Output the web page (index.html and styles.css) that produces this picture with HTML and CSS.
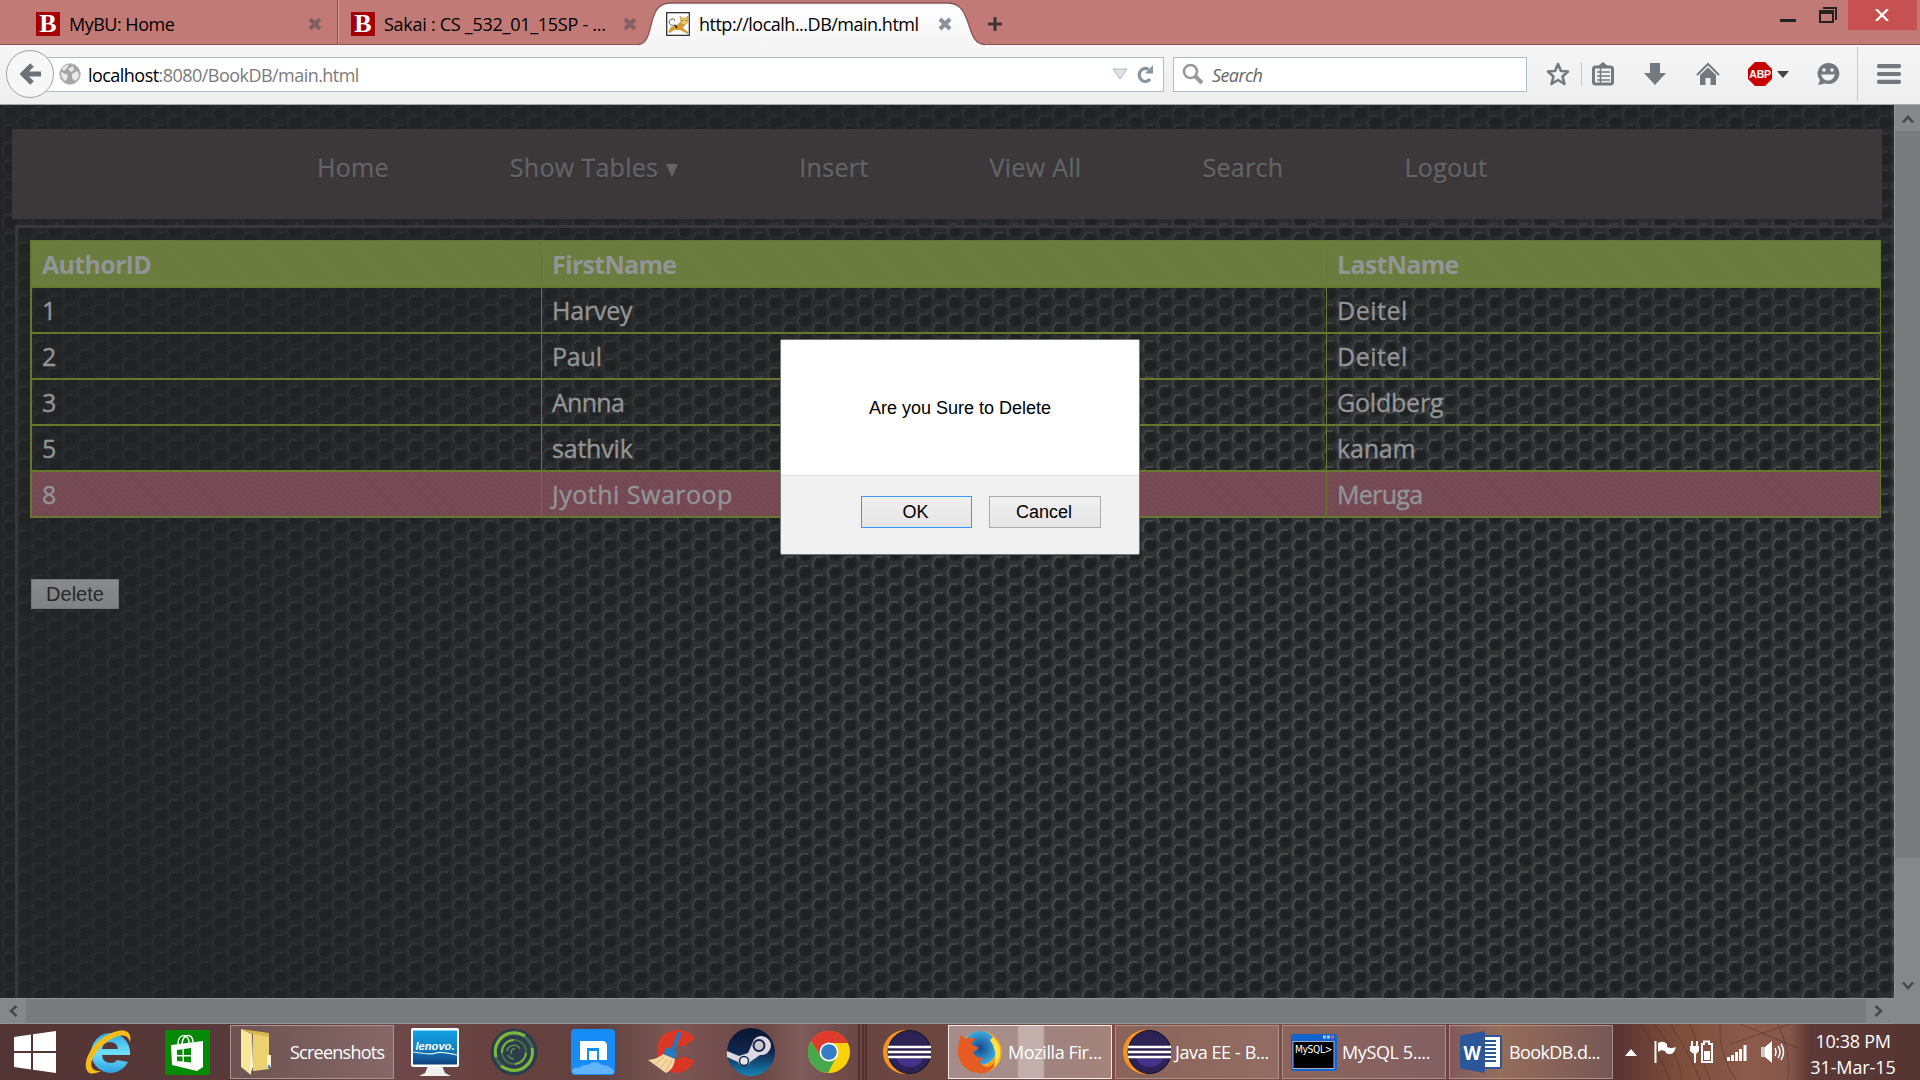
FILE: index.html
```
<!DOCTYPE html>
<html lang="en">
<head>
<meta charset="utf-8">
<title>BookDB</title>
<link rel="stylesheet" href="styles.css">
</head>
<body>
<header class="tabstrip">
  <div class="tab tab-first">
    <span class="bu">B</span><span class="tab-title t1">MyBU: Home</span>
    <svg class="x" viewBox="0 0 14 14"><path d="M2 2L12 12M12 2L2 12"/></svg>
  </div>
  <div class="tab tab-second">
    <span class="bu">B</span><span class="tab-title t2">Sakai : CS _532_01_15SP - ...</span>
    <svg class="x" viewBox="0 0 14 14"><path d="M2 2L12 12M12 2L2 12"/></svg>
  </div>
  <div class="tab tab-active">
    <svg class="tab-shape" viewBox="0 0 348 46"><defs><linearGradient id="tg" x2="0" y2="1"><stop offset="0" stop-color="#fff"/><stop offset="1" stop-color="#f5f5f5"/></linearGradient></defs><path d="M0 46V44.500C18 44 7 3 32 3H310C336 3 326 44.500 347 44.500V46Z" fill="url(#tg)"/><path d="M0 44.500C18 44 7 3 32 3H310C336 3 326 44.500 347 44.500" fill="none" stroke="#875459" stroke-width="1.300"/></svg>
    <svg class="tomcat" viewBox="0 0 24 24"><rect x=".7" y=".7" width="22.600" height="22.600" fill="#fff" stroke="#222" stroke-width="1.200"/><path d="M2 20L5 15 11 13 14 10 19 13 17 16 22 20 22 22 14 18 8 18 4 21Z" fill="#d89b32"/><path d="M14 4L16 6 20 6 22 4 22 10 19 13 15 12Z" fill="#ecc95a" stroke="#a98a3a" stroke-width=".6"/><path d="M9 13C3 15 1 8 6 7C9 6 9 9 8 9" fill="none" stroke="#555" stroke-width="1"/><path d="M9 13l2 3" stroke="#222" stroke-width="1.500"/><path d="M16 8.500h1M19.500 8.500h1" stroke="#333" stroke-width="1"/></svg>
    <span class="tab-title t3">http://localh...DB/main.html</span>
    <svg class="x x-active" viewBox="0 0 14 14"><path d="M2 2L12 12M12 2L2 12"/></svg>
  </div>
  <svg class="newtab" viewBox="0 0 16 16"><path d="M8 1V15M1 8H15" stroke="#3c3436" stroke-width="3"/></svg>
  <div class="winbtns">
    <svg class="min" viewBox="0 0 16 16"><path d="M0 12.500H16" stroke="#222" stroke-width="3"/></svg>
    <svg class="restore" viewBox="0 0 18 16"><path d="M4 1H17V13" fill="none" stroke="#222" stroke-width="2"/><path d="M1 4H14V15H1Z" fill="none" stroke="#222" stroke-width="2"/><path d="M0 5H15" stroke="#222" stroke-width="4"/></svg>
    <div class="close"><svg viewBox="0 0 14 12"><path d="M1 0L13 12M13 0L1 12" stroke="#fff" stroke-width="2.200"/></svg></div>
  </div>
</header>

<div class="toolbar">
  <div class="back"><svg viewBox="0 0 22 24"><path d="M12 3L3 12L12 21M4 12H21" fill="none" stroke="#6d7178" stroke-width="5"/></svg></div>
  <div class="urlbar">
    <svg class="globe" viewBox="0 0 22 22"><circle cx="11" cy="11" r="10.300" fill="#a5a5a5" stroke="#bdbdbd"/><path d="M3 6Q5 2 10 2L8 5 5 8ZM9 6L14 3 15 7 12 9ZM2 9L9 12 8 16 6 18Q2 15 2 9ZM13 11L18 8 20 11Q20 16 16 18L13 15Z" fill="#e9e9e9"/></svg>
    <span class="url">localhost<i>:8080/BookDB/main.html</i></span>
    <svg class="drop" viewBox="0 0 16 12"><path d="M1 1H15L8 11Z" fill="#dde1e8" stroke="#b4bcc7" stroke-width="1"/></svg>
    <svg class="reload" viewBox="0 0 18 18"><path d="M12.500 4.500A6 6.500 0 1 0 14 14" fill="none" stroke="#8795a3" stroke-width="3.200"/><path d="M17 0V8.500H9Z" fill="#8795a3"/></svg>
  </div>
  <div class="searchbar">
    <svg viewBox="0 0 22 22"><circle cx="8.500" cy="8.500" r="6.500" fill="none" stroke="#999" stroke-width="2.600"/><path d="M13 13L20 20" stroke="#999" stroke-width="4"/></svg>
    <span>Search</span>
  </div>
  <svg class="ic star" viewBox="0 0 24 24"><path d="M12 2L15 9 22 9.500 16.500 14.500 18.500 22 12 18 5.500 22 7.500 14.500 2 9.500 9 9Z" fill="none" stroke="#747980" stroke-width="2.600" stroke-linejoin="round"/></svg>
  <span class="sep-s"></span>
  <svg class="ic clip" viewBox="0 0 22 24"><rect x="1.500" y="5" width="19" height="17" rx="2" fill="none" stroke="#747980" stroke-width="3"/><path d="M6 4L11 0 16 4Z" fill="#747980"/><path d="M5 10H18M5 14H18M5 18H18M8.500 6V21" stroke="#747980" stroke-width="1.500"/></svg>
  <svg class="ic down" viewBox="0 0 22 24"><path d="M6 1H16V11H22L11 23 0 11H6Z" fill="#747980"/></svg>
  <svg class="ic home" viewBox="0 0 24 24"><path d="M1 13L12 2 23 13" fill="none" stroke="#747980" stroke-width="2"/><path d="M4 13L12 5.500 20 13V23H14.500V16H9.500V23H4Z" fill="#747980"/></svg>
  <svg class="ic abp" viewBox="0 0 24 24"><path d="M7 0H17L24 7V17L17 24H7L0 17V7Z" fill="#c90000"/><text x="12" y="16.200" text-anchor="middle">ABP</text></svg>
  <svg class="caret" viewBox="0 0 12 7"><path d="M0 0H12L6 7Z" fill="#444"/></svg>
  <svg class="ic face" viewBox="0 0 24 24"><path d="M12 1A11 10.500 0 1 1 9 21.500L2 23 4 18A11 10.500 0 0 1 12 1Z" fill="#747980"/><circle cx="8" cy="8" r="1.800" fill="#f3f3f3"/><circle cx="16" cy="8" r="1.800" fill="#f3f3f3"/><path d="M5 12.500H19Q17 18.500 12 18.500T5 12.500Z" fill="#f3f3f3"/></svg>
  <span class="sep-l"></span>
  <svg class="ic menu" viewBox="0 0 24 20"><path d="M2 2.200H22M2 10H22M2 17.800H22" stroke="#747980" stroke-width="4.200" stroke-linecap="round"/></svg>
</div>

<main class="viewport">
  <svg class="mesh" width="1894" height="893">
    <defs>
      <pattern id="hex" width="30" height="18" patternUnits="userSpaceOnUse">
        <g id="c"><circle cx="10" cy="8" r="7" fill="#252729"/><circle cx="11" cy="9" r="4.500" fill="#1f2123"/><path d="M4 13L2.500 8L6 2H13" fill="none" stroke="#555758" stroke-width="2.200" stroke-linejoin="round" opacity=".8"/></g>
        <use href="#c" x="15" y="9"/><use href="#c" x="15" y="-9"/><use href="#c" x="-15" y="9"/><use href="#c" x="-15" y="-9"/><use href="#c" y="18"/><use href="#c" x="30"/>
      </pattern>
      <pattern id="dots" width="4" height="4" patternUnits="userSpaceOnUse"><path d="M0 0h2v2h-2zM2 2h2v2h-2z" fill="#000" opacity=".07"/></pattern>
      <radialGradient id="lit" gradientUnits="userSpaceOnUse" cx="0" cy="0" r="1" gradientTransform="translate(1450 600) scale(1400 680)">
        <stop offset="0" stop-color="#fff"/><stop offset=".4" stop-color="#ddd"/><stop offset=".75" stop-color="#777"/><stop offset="1" stop-color="#333"/>
      </radialGradient>
      <mask id="fade" maskUnits="userSpaceOnUse" x="0" y="0" width="1894" height="893"><rect width="1894" height="893" fill="url(#lit)"/></mask>
    </defs>
    <rect width="1894" height="893" fill="#232527"/>
    <g mask="url(#fade)"><rect width="1894" height="893" fill="#343637"/><rect width="1894" height="893" fill="url(#hex)"/></g>
    <rect width="1894" height="893" fill="url(#dots)"/>
  </svg>
  <div class="page">
    <nav class="nav"><a>Home</a><a>Show Tables <svg viewBox="0 0 12 14"><path d="M0 1H12L6 14Z" fill="#626466"/></svg></a><a>Insert</a><a>View All</a><a>Search</a><a>Logout</a></nav>
    <section class="frame">
      <div class="grid">
        <div class="row head"><span>AuthorID</span><span>FirstName</span><span>LastName</span></div>
        <div class="row"><span>1</span><span>Harvey</span><span class="loose">Deitel</span></div>
        <div class="row"><span>2</span><span>Paul</span><span class="loose">Deitel</span></div>
        <div class="row"><span>3</span><span class="tight">Annna</span><span>Goldberg</span></div>
        <div class="row"><span>5</span><span>sathvik</span><span>kanam</span></div>
        <div class="row picked"><span>8</span><span class="loose">Jyothi Swaroop</span><span class="tight">Meruga</span></div>
      </div>
      <button class="delete">Delete</button>
    </section>
  </div>
  <div class="vscroll">
    <div class="sbtn"><svg viewBox="0 0 12 10"><path d="M1 8.500L6 3L11 8.500" /></svg></div>
    <div class="vthumb"></div><div class="grow"></div>
    <div class="sbtn"><svg viewBox="0 0 12 10"><path d="M1 1.500L6 7L11 1.500" /></svg></div>
  </div>
  <div class="hscroll">
    <div class="sbtn"><svg viewBox="0 0 10 12"><path d="M8.500 1L3 6L8.500 11" /></svg></div>
    <div class="hthumb"></div>
    <div class="sbtn"><svg viewBox="0 0 10 12"><path d="M1.500 1L7 6L1.500 11" /></svg></div>
  </div>
  <div class="dialog">
    <p>Are you Sure to Delete</p>
    <div class="actions"><button class="ok">OK</button><button>Cancel</button></div>
  </div>
</main>

<footer class="taskbar">
  <svg class="hair" width="1920" height="56" fill="none" stroke="#2c1512"><path d="M859 0V56M863 0V56M866 0V56" stroke-opacity=".55" stroke-width="1.500"/><path d="M1640 0Q1655 20 1670 56M1654 0Q1680 30 1682 56M1670 0Q1690 30 1700 56M1720 0Q1718 30 1736 56M1690 0L1710 56M1778 0Q1792 30 1788 56M1740 0L1798 24M1730 20L1790 0" stroke-opacity=".3"/></svg>
  <svg class="app start" viewBox="0 0 42 42"><path d="M0 6L17 3.500V20H0ZM19 3.200L42 0V20H19ZM0 22H17V38.500L0 36ZM19 22H42V42L19 38.800Z" fill="#fff"/></svg>
  <svg class="app ie" viewBox="0 0 46 46"><defs><linearGradient id="ieg" x2="0" y2="1"><stop offset="0" stop-color="#2fa8e8"/><stop offset=".5" stop-color="#6fe0fb"/><stop offset="1" stop-color="#2f9fe0"/></linearGradient></defs><path d="M43 33A19.500 20 0 1 1 45 26H17Q18 34 26 34Q30 34 32 31ZM17 20H33Q32 13 25 13Q18 13 17 20Z" fill="url(#ieg)"/><path d="M45 13C48-2 33-1 19 8C3 19-3 36 3 43C6 46 12 44 16 42C5 43 2 34 14 20C26 7 42 1 45 13Z" fill="#f7bd16"/></svg>
  <svg class="app store" viewBox="0 0 45 45"><rect width="45" height="45" fill="#048a04"/><path d="M6 15L38 11V37L32 41 7 35Z" fill="#fff"/><path d="M13 14C13 3 24 3 24 13M17 14C18 3 28 3 28 12" fill="none" stroke="#fff" stroke-width="1.500"/><path d="M12 20L17.500 19.300V25H12ZM19 19L26 18V25H19ZM12 26.500H17.500V31.500L12 31ZM19 26.500H26V32.500L19 31.800Z" fill="#048a04"/></svg>
  <div class="task shots"><svg class="folder" viewBox="0 0 36 46"><path d="M12 3L28 5V40L12 42Z" fill="#ecd171"/><path d="M0 0L11 5 10 46 0 38Z" fill="#f7e798"/><path d="M0 0L28 4V8L12 5Z" fill="#d8b94e"/><path d="M11 6L9 45 12 38Z" fill="#fffbe0"/><path d="M26 26H30V38H26Z" fill="#f9f3d0"/><path d="M27 36h2v3h-2z" fill="#2c7ef0"/></svg><span class="s1">Screenshots</span></div>
  <svg class="app lenovo" viewBox="0 0 48 48"><defs><linearGradient id="lg" x2="0" y2="1"><stop offset="0" stop-color="#12a2e6"/><stop offset=".5" stop-color="#1283c2"/><stop offset="1" stop-color="#10407c"/></linearGradient></defs><path d="M17 38H31L34 45 40 48H8L14 45Z" fill="#f0f0f0"/><rect width="48" height="39" rx="2" fill="#fff"/><rect x="2" y="2.500" width="44" height="34" fill="url(#lg)"/><path d="M2 24Q20 27 25 25T46 27" fill="none" stroke="#d8eefa" stroke-width="1.200"/><text x="24" y="22" text-anchor="middle" textLength="39" lengthAdjust="spacingAndGlyphs">lenovo.</text></svg>
  <svg class="app swirl" viewBox="0 0 48 48" fill="none"><circle cx="24" cy="24" r="23.500" fill="#2e3d4b"/><circle cx="24" cy="24" r="18.500" stroke="#406852" stroke-width="3"/><path d="M6 29A19 19 0 0 1 35 8M42 20A18.500 18.500 0 0 1 24 42.500Q17 42 11 38" stroke="#7cb83a" stroke-width="3"/><circle cx="24" cy="24" r="12" stroke="#456e4f" stroke-width="2"/><path d="M12 25A12 12 0 0 1 24 12M36 25A12 12 0 0 1 25 36" stroke="#76b340" stroke-width="2"/><path d="M17 23A7 7 0 0 1 30 21M18 27A7 7 0 0 0 24 31M22 26A3 3 0 0 1 25 21" stroke="#5c8f4a" stroke-width="1.500"/></svg>
  <svg class="app max" viewBox="0 0 44 46"><rect width="44" height="46" rx="4" fill="#168df6"/><path d="M1 42Q3 37 8 39Q12 35 17 36Q24 30 31 36Q38 35 43 42L42 45H3Z" fill="#61b3fb"/><path d="M9 12H31Q36 12 36 17V31H9Z" fill="#fff"/><path d="M16 31V19H28V31H26V22H18V31Z" fill="#168df6"/></svg>
  <svg class="app cc" viewBox="0 0 48 44"><path d="M47 9Q41 0 30 0Q9 1 9 22Q10 42 29 43Q41 42 47 31L35 26Q31 31 27 29Q21 26 22 19Q25 12 35 17Z" fill="#d93624"/><path d="M31 4L24 23" stroke="#2277be" stroke-width="4" stroke-linecap="round"/><path d="M19 17L29 22 27 29 15 24Z" fill="#2878bd"/><path d="M15 24L27 29Q26 39 18 43L0 30Q10 29 15 24Z" fill="#f4d7a1"/><path d="M16 27L6 35M20 29L12 38M24 30L18 40" stroke="#d9b27c"/></svg>
  <svg class="app steam" viewBox="0 0 48 48"><defs><linearGradient id="sg" x2="0" y2="1"><stop offset="0" stop-color="#081632"/><stop offset=".5" stop-color="#13254f"/><stop offset="1" stop-color="#1285b6"/></linearGradient></defs><circle cx="24" cy="24" r="24" fill="url(#sg)"/><path d="M0 23L12 28 21 25 25 16A9.500 9.500 0 1 1 33 27L23 34A6.500 6.500 0 0 1 11 34L0 29Z" fill="#ddd8df"/><circle cx="32" cy="17.500" r="5.500" fill="#c9c4ce" stroke="#14244c" stroke-width="2"/><circle cx="17" cy="33" r="4.500" fill="#e9e6ea" stroke="#14244c" stroke-width="1.500"/></svg>
  <svg class="app chrome" viewBox="0 0 42 42"><circle cx="21" cy="21" r="21" fill="#fcd20d"/><path d="M3 10A21 21 0 0 0 20 42L29 25 21 21 12 24Z" fill="#47a94a"/><path d="M21 12H40A21 21 0 0 0 3 10L12 24Z" fill="#df3a2b"/><circle cx="21" cy="21" r="9.500" fill="#fff"/><circle cx="21" cy="21" r="7.800" fill="#347cc4"/></svg>
  <svg class="app ecl" viewBox="0 0 48 44"><g id="ec"><path d="M22 0A22 22 0 0 0 22 44L26 42V2Z" fill="#f7941e"/><circle cx="26.500" cy="22" r="21.500" fill="#2c2255" stroke="#120f1e"/><path d="M13 28H40Q37 37 26.500 37T13 28Z" fill="#453286"/><path d="M5 17H48M5 22H48M5 27H48" stroke="#fff" stroke-width="2.400"/></g></svg>
  <div class="task active"><svg class="ff" viewBox="0 0 44 44"><defs><radialGradient id="fg"><stop offset="0" stop-color="#15498c"/><stop offset="1" stop-color="#3dabe2"/></radialGradient></defs><circle cx="23" cy="22" r="21" fill="#f5a51d"/><circle cx="22" cy="18" r="17" fill="url(#fg)"/><path d="M3 5L8 9Q13 6 17 9L13 14 21 18 15 22Q18 30 26 27Q17 34 29 37Q36 36 40 27Q35 45 20 43Q3 41 0 24Q0 12 3 5Z" fill="#e65b22"/><path d="M35 7Q44 15 42 26Q40 34 36 37Q40 20 32 10Z" fill="#fde14a"/></svg><span class="s2">Mozilla Fir...</span></div>
  <div class="task java"><svg class="ec" viewBox="0 0 48 44"><use href="#ec"/></svg><span class="s3">Java EE - B...</span></div>
  <div class="task mysql"><svg viewBox="0 0 46 37"><rect width="46" height="37" rx="2" fill="#1263ce"/><rect x="2" y="7.500" width="41" height="27" fill="#000" stroke="#aac"/><path d="M32 3h3m1 0h3" stroke="#a9c9ff" stroke-width="3"/><path d="M40 3h3" stroke="#e86340" stroke-width="3"/><text x="4" y="19" textLength="37" lengthAdjust="spacingAndGlyphs">MySQL&gt;</text></svg><span class="s4">MySQL 5....</span></div>
  <div class="task word"><svg viewBox="0 0 42 42"><path d="M23 4H40Q42 4 42 6V36Q42 38 40 38H23Z" fill="#2b579a"/><path d="M25 6H40V36H25Z" fill="#fff"/><path d="M25 10H36M25 14H36M25 18H36M25 22H36M25 26H36M25 30H36" stroke="#2b579a" stroke-width="1.800"/><path d="M0 4.500L25 0V42L0 37.500Z" fill="#2b579a"/><text x="12" y="29" text-anchor="middle" textLength="17" lengthAdjust="spacingAndGlyphs">W</text></svg><span class="s5">BookDB.d...</span></div>
  <svg class="tray up" viewBox="0 0 12 7"><path d="M6 0L12 7H0Z" fill="#fff"/></svg>
  <svg class="tray flag" viewBox="0 0 24 24"><path d="M1.500 1V23" stroke="#fff" stroke-width="2"/><path d="M4 3Q9 0 13 4V7Q17 9 22 7Q20 15 15 14Q12 14 11 11Q7 9 4 12Z" fill="#fff"/></svg>
  <svg class="tray batt" viewBox="0 0 24 24"><path d="M2 1V6M7 1V6" stroke="#fff" stroke-width="2"/><path d="M0 6H9V11L6 14V23H4V14L0 11Z" fill="#fff"/><path d="M12 4H14V1.500H19V4H22V22H12Z" fill="none" stroke="#fff" stroke-width="2"/><path d="M14 11H20V20H14Z" fill="#fff"/></svg>
  <svg class="tray sig" viewBox="0 0 20 17"><path d="M1.500 13V17M5.500 11V17M9.500 8V17M13.500 5V17M18 1V17" stroke="#fff" stroke-width="3"/></svg>
  <svg class="tray spk" viewBox="0 0 26 24"><path d="M1 7H5V17H1Z" fill="#ccc"/><path d="M5 7L12 1V23L5 17Z" fill="#fff"/><path d="M15 8Q17 12 15 16M18 6Q22 12 18 18M21 4Q26 12 21 20" fill="none" stroke="#fff" stroke-width="1.500"/></svg>
  <div class="clock"><span class="k1">10:38 PM</span><span class="k2">31-Mar-15</span></div>
</footer>
</body>
</html>
```
FILE: styles.css
```
* { box-sizing: border-box; }
body { margin: 0; width: 1920px; height: 1080px; overflow: hidden; display: flex; flex-direction: column; font-family: "Open Sans", "Noto Sans", sans-serif; font-size: 18px; color: #000; }
svg { display: block; flex: none; }
span, a { white-space: nowrap; }

.tabstrip { height: 45px; flex: none; background: #c27a76; border-bottom: 1px solid #875459; display: flex; align-items: flex-start; }
.tab { height: 44px; display: flex; align-items: center; padding-top: 4px; }
.tab-first { width: 338px; padding-left: 36px; border-right: 1px solid #75565b; }
.tab-second { width: 302px; padding-left: 12px; border-left: 1px solid #d49b98; }
.tab-active { position: relative; width: 347px; padding-left: 26px; }
.tab-shape { position: absolute; left: -2px; top: 0; width: 348px; height: 46px; }
.tomcat { position: relative; width: 24px; height: 24px; margin-right: 9px; }
.bu { width: 24px; height: 24px; margin-right: 9px; background: #a50005; color: #fff; font: bold 26px/24px "Liberation Serif", serif; text-align: center; }
.tab-title { position: relative; line-height: 24px; letter-spacing: -0.5px; }
.t1 { width: 239px; }
.t2 { width: 239px; letter-spacing: -0.27px; }
.t3 { width: 239px; }
.x { width: 14px; height: 14px; fill: none; stroke: #825f65; stroke-width: 4; }
.x-active { position: relative; stroke: #87919c; }
.newtab { width: 16px; height: 16px; margin-top: 16px; }
.winbtns { margin-left: auto; display: flex; align-items: flex-start; padding-right: 3px; }
.min { width: 16px; height: 16px; margin: 8px 23px 0 0; }
.restore { width: 18px; height: 16px; margin: 7px 11px 0 0; }
.close { width: 69px; height: 30px; background: #c75050; display: grid; place-items: center; padding-right: 2px; }
.close svg { width: 14px; height: 12px; }

.toolbar { height: 60px; flex: none; background: linear-gradient(#f6f6f6, #eee); border-bottom: 1px solid #a5a8aa; display: flex; align-items: center; padding: 0 18px 1px 6px; }
.back { z-index: 1; width: 48px; height: 48px; border: 1.500px solid #a2a2a4; border-radius: 50%; background: #f7f7f7; display: grid; place-items: center; padding-left: 2px; }
.back svg { width: 22px; height: 24px; }
.urlbar, .searchbar { height: 35px; background: #fff; border: 1px solid #b3bcc6; display: flex; align-items: center; }
.urlbar { width: 1118px; margin-left: -8px; padding: 0 9px 0 12px; }
.globe { width: 22px; height: 22px; margin-right: 7px; }
.url { flex: 1; letter-spacing: -0.54px; padding-top: 2px; }
.url i { font-style: normal; color: #7b7b7b; }
.drop { width: 16px; height: 12px; margin-right: 8px; }
.reload { width: 18px; height: 18px; }
.searchbar { width: 354px; margin-left: 9px; padding-left: 8px; gap: 8px; }
.searchbar svg { width: 22px; height: 22px; }
.searchbar span { font-style: italic; color: #666; letter-spacing: -0.6px; padding-top: 2px; }
.ic { width: 24px; height: 24px; }
.star { margin-left: 19px; }
.sep-s { width: 1px; height: 24px; background: #c4c8cc; margin-left: 11px; }
.clip { width: 22px; margin-left: 10px; }
.down { width: 22px; margin-left: 30px; }
.home { margin-left: 30px; }
.abp { margin-left: 28px; overflow: visible; }
.abp text { font: bold 10.5px "Liberation Sans", sans-serif; fill: #fff; letter-spacing: -0.3px; }
.caret { width: 12px; height: 7px; margin-left: 5px; }
.face { margin-left: 27px; }
.sep-l { width: 1px; height: 54px; background: #c3cad2; margin-left: 17px; }
.menu { height: 20px; margin-left: 19px; }

.viewport { position: relative; height: 919px; flex: none; display: grid; grid-template: 893px 26px / 1894px 26px; background: #868788; }
.mesh { position: absolute; left: 0; top: 0; }
.page { position: relative; padding: 24px 0 0 12px; display: flex; flex-direction: column; overflow: hidden; }
.nav { width: 1870px; height: 90px; background: repeating-linear-gradient(45deg, #3b3739 0 2px, #3d393a 2px 4px); padding: 19px 0 0 305px; display: flex; align-items: flex-start; gap: 121px; color: #626466; font-size: 25px; -webkit-text-stroke: 0.4px #626466; line-height: 38px; letter-spacing: 0.3px; text-shadow: 0 1px 1px #29282b; }
.nav a { display: flex; align-items: center; gap: 8px; }
.nav svg { width: 12px; height: 14px; margin-top: 5px; }
.frame { margin: 6px 0 0 3px; flex: 1; border: solid #3b3638; border-width: 3px 0 0 3px; padding: 12px 0 0 12px; }
.grid { width: 1851px; border: 1px solid #66782c; border-width: 1px 1px 0 2px; color: #939496; font-size: 25px; letter-spacing: -0.2px; }
.row { display: grid; grid-template-columns: 510px 785px 1fr; height: 46px; border-bottom: 2px solid #66782c; line-height: 44px; -webkit-text-stroke: 0.4px #939496; }
.row span { padding-left: 10px; border-right: 1px solid #66782c; }
.row span:last-child { border-right: 0; }
.row .loose { letter-spacing: 0.5px; }
.row .tight { letter-spacing: -0.7px; }
.head { height: 47px; background: repeating-linear-gradient(45deg, #6a7b3e 0 2px, #6c7d40 2px 4px); font-weight: bold; line-height: 46px; letter-spacing: -0.7px; -webkit-text-stroke: 0; }
.picked { background: repeating-linear-gradient(45deg, #734852 0 2px, #774c56 2px 4px); }
.delete { display: block; margin: 61px 0 0 1px; width: 88px; height: 30px; padding: 0; border: 1px solid #737577; background: linear-gradient(#88898a, #808182); font: 20px "Liberation Sans", Arial, sans-serif; color: #262829; }

.vscroll, .hscroll { position: relative; display: flex; background: #868788; }
.vscroll { flex-direction: column; border-left: 1px solid #929394; }
.hscroll { border-top: 1px solid #929394; border-bottom: 1px solid #929394; }
.sbtn { width: 26px; height: 26px; display: grid; place-items: center; flex: none; }
.vscroll .sbtn { padding: 1px 0 0; }
.hscroll .sbtn { height: 24px; }
.sbtn svg { width: 12px; height: 10px; fill: none; stroke: #47484a; stroke-width: 2.600; }
.hscroll .sbtn svg { width: 10px; height: 12px; }
.vthumb { height: 727px; background: #7a7b7c; }
.hthumb { width: 1840px; background: #7a7b7c; }
.grow { flex: 1; }

.dialog { position: absolute; left: 780px; top: 234px; width: 360px; height: 216px; border: 1px solid #777; border-radius: 2px; background: #f1f1f1; font: 18px "Liberation Sans", Arial, sans-serif; }
.dialog p { margin: 0; height: 136px; padding-top: 2px; background: #fff; border-bottom: 1px solid #dfdfdf; display: grid; place-items: center; }
.actions { display: flex; justify-content: flex-end; gap: 17px; padding: 20px 38px 0 0; }
.actions button { width: 112px; height: 32px; padding: 0 2px 0 0; border: 1px solid #acacac; background: linear-gradient(#f0f0f0, #e5e5e5); font: inherit; }
.actions .ok { border-color: #3399ff; width: 111px; }

.taskbar { position: relative; height: 56px; flex: none; display: flex; align-items: center; color: #fff; background: linear-gradient(90deg, #533435 0, #583a3a 230px, #6e4848 400px, #67423f 500px, #5f403e 600px, #7c5754 670px, #6b4747 760px, #7f5b59 800px, #6b4543 860px, #6e4640 940px, #7a4c42 1110px, #7c4e42 1280px, #6a4044 1440px, #85553f 1500px, #5a3433 1615px, #7e4e3c 1680px, #8b5a4b 1750px, #84564a 1790px, #5c3936 1810px, #553532 1920px); }
.hair { position: absolute; left: 0; top: 0; }
.app, .tray, .task, .clock { position: relative; flex: none; }
.start { width: 42px; height: 42px; margin-left: 14px; }
.ie { width: 46px; height: 46px; margin-left: 29px; }
.store { width: 45px; height: 45px; margin-left: 34px; }
.task { height: 54px; width: 164px; border: 1px solid #aa9290; background: linear-gradient(90deg, #ffffff20, #ffffff2c); display: flex; align-items: center; letter-spacing: -0.4px; }
.task.shots { margin-left: 20px; padding-left: 10px; letter-spacing: -0.75px; }
.folder { width: 36px; height: 46px; margin-right: 13px; }
.lenovo { width: 48px; height: 48px; margin-left: 17px; }
.lenovo text { font: italic bold 11px "Liberation Sans", sans-serif; fill: #fff; }
.swirl { width: 48px; height: 48px; margin-left: 31px; }
.max { width: 44px; height: 46px; margin-left: 33px; }
.cc { width: 48px; height: 44px; margin-left: 33px; }
.steam { width: 48px; height: 48px; margin-left: 31px; }
.chrome { width: 42px; height: 42px; margin-left: 33px; }
.ecl { width: 48px; height: 44px; margin-left: 33px; }
.active { margin-left: 17px; padding-left: 9px; border: 1px solid #f3eeee; background: linear-gradient(90deg, #ffffff60 0 68px, #ffffff90 70px 94px, #ffffff50 96px); }
.ff { width: 44px; height: 44px; margin-right: 6px; }
.java { margin-left: 3px; padding-left: 7px; }
.ec { width: 48px; height: 44px; margin-right: 4px; }
.mysql { margin-left: 3px; padding-left: 8px; }
.mysql svg { width: 46px; height: 37px; margin-right: 5px; }
.mysql text { font: 10px "DejaVu Sans", sans-serif; fill: #fff; }
.word { margin-left: 3px; padding-left: 10px; }
.word svg { width: 42px; height: 42px; margin-right: 7px; }
.s5 { letter-spacing: -0.6px; }
.word text { font: bold 20px "Open Sans", sans-serif; fill: #fff; }
.up { width: 12px; height: 7px; margin-left: 12px; }
.flag { width: 24px; height: 24px; margin-left: 17px; }
.batt { width: 24px; height: 24px; margin-left: 12px; }
.sig { width: 20px; height: 17px; margin-left: 13px; }
.spk { width: 26px; height: 24px; margin-left: 13px; }
.clock { margin-left: 12px; width: 110px; display: flex; flex-direction: column; align-items: center; line-height: 26px; letter-spacing: -0.3px; padding-top: 4px; }
.k2 { letter-spacing: -0.1px; }
```
